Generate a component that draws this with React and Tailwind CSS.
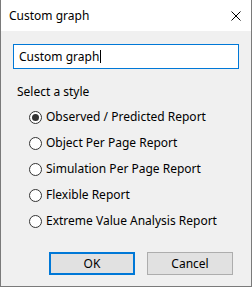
import React, { useState } from 'react';

const options = [
  'Observed / Predicted Report',
  'Object Per Page Report',
  'Simulation Per Page Report',
  'Flexible Report',
  'Extreme Value Analysis Report',
];

function Radio({ label, checked, onSelect }) {
  return (
    <div className="flex items-center h-[26px] cursor-default" onClick={onSelect}>
      <span className="w-[13px] h-[13px] rounded-full border border-[#333333] bg-white flex items-center justify-center">
        {checked && <span className="w-[7px] h-[7px] rounded-full bg-[#333333]" />}
      </span>
      <span className="ml-[4px]">{label}</span>
    </div>
  );
}

export default function App() {
  const [selected, setSelected] = useState(0);

  return (
    <div
      className="w-[252px] h-[287px] border-x border-b border-[#7a7a7a] bg-[#f0f0f0] flex flex-col text-[12px] text-black"
      style={{ fontFamily: '"Noto Sans", "Liberation Sans", sans-serif' }}
    >
      {/* title bar */}
      <div className="h-[31px] bg-white flex items-center justify-between pl-[8px] pr-[10px] shrink-0">
        <span>Custom graph</span>
        <svg width="10" height="10" viewBox="0 0 10 10">
          <path d="M0.5 0.5 L9.5 9.5 M9.5 0.5 L0.5 9.5" stroke="#000" strokeWidth="1" />
        </svg>
      </div>

      <div className="flex flex-col px-[12px]">
        <div className="mt-[13px] w-[226px] h-[25px] border border-[#0078d7] bg-white flex items-center pl-[5px]">
          <span>Custom graph</span>
          <span className="w-px h-[13px] bg-black ml-[1px]" />
        </div>

        <div className="mt-[14px] pl-[4px]">Select a style</div>

        <div className="mt-[3px] pl-[16px] flex flex-col">
          {options.map((o, i) => (
            <Radio key={o} label={o} checked={selected === i} onSelect={() => setSelected(i)} />
          ))}
        </div>

        <div className="mt-[18px] flex pl-[36px] gap-[12px]">
          <button className="w-[86px] h-[23px] border-2 border-[#0078d7] bg-[#e1e1e1]">OK</button>
          <button className="w-[86px] h-[23px] border border-[#adadad] bg-[#e1e1e1]">Cancel</button>
        </div>
      </div>
    </div>
  );
}
